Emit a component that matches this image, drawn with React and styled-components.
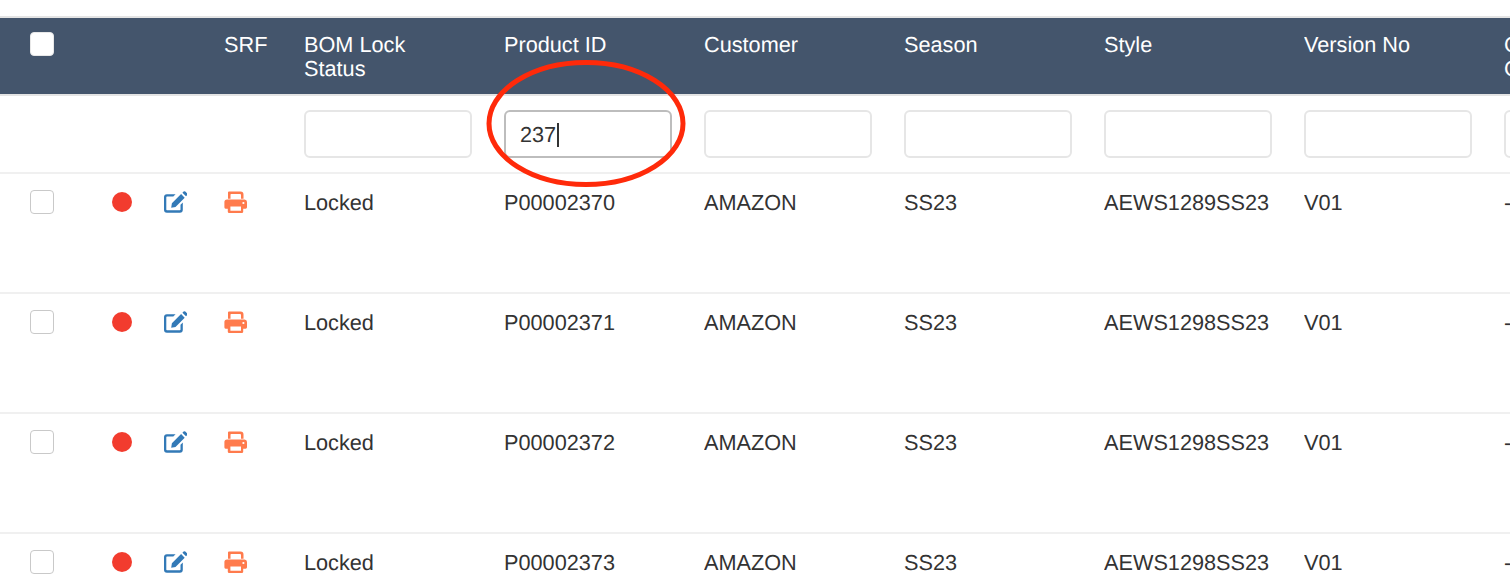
import React from "react";
import styled, { createGlobalStyle } from "styled-components";

const Global = createGlobalStyle`
  html, body { margin: 0; padding: 0; height: 100%; overflow: hidden; background: #fff; }
  body { font-family: "Liberation Sans", Arial, sans-serif; font-size: 21.7px; color: #333; text-rendering: geometricPrecision; }
`;
const COLS = "112px 52px 60px 80px repeat(7, 200px)";

const Page = styled.div`position: relative; width: 1510px; height: 578px; overflow: hidden; padding-top: 16px; box-sizing: border-box;`;
const Grid = styled.div`display: grid; grid-template-columns: ${COLS}; width: 1624px;`;
const HeaderRow = styled(Grid)`
  background: #44556c; color: #fff; height: 80px; box-sizing: border-box;
  border-top: 2px solid #e4e4e4; border-bottom: 2px solid #e4e4e4; line-height: 24px; padding-top: 14px;
`;
const HeadLabel = styled.div`white-space: pre-line; overflow: hidden; padding-top: 1px;`;
const FilterRow = styled(Grid)`height: 76px; box-sizing: border-box; padding-top: 14px;`;
const BodyRow = styled(Grid)`height: 120px; box-sizing: border-box; border-top: 2px solid #f0f0f0; padding-top: 16px; line-height: 24px;`;
const Cell = styled.div`white-space: pre-line; overflow: hidden; padding-top: ${p => (p.$text ? "1px" : "0")};`;
const CheckCell = styled.div`padding-left: 30px;`;
const Check = styled.span`
  display: block; width: 24px; height: 24px; box-sizing: border-box; border-radius: 4px;
  background: #fff; border: 1px solid ${p => (p.$head ? "#e8e8e8" : "#c9c9c9")};
`;
const Dot = styled.span`display: block; width: 20px; height: 20px; margin-top: 2px; border-radius: 50%; background: #f23c2e;`;
const IconCell = styled.div`color: ${p => p.$color}; line-height: 0; margin-left: ${p => p.$shift || 0}px;`;
const FilterInput = styled.div`
  width: 168px; height: 48px; box-sizing: border-box; border-radius: 6px;
  border: 2px solid ${p => (p.$active ? "#bdbdbd" : "#e6e6e6")};
  padding: 1px 14px 0; line-height: 44px; color: #333; display: flex; align-items: center;
`;
const Caret = styled.span`display: inline-block; width: 1.5px; height: 24px; margin-left: 1px; background: #333;`;
const Circle = styled.svg`position: absolute; left: 480px; top: 54px; pointer-events: none;`;

const EditIcon = () => (
  <svg width="24" height="24" viewBox="0 0 24 24" fill="currentColor">
    <path d="M12.6 4.2H3.9A2.9 2.9 0 0 0 1 7.1v12.7a2.9 2.9 0 0 0 2.9 2.9h13a2.9 2.9 0 0 0 2.9-2.9v-7.3l-2.3 2.3v4.8a.7.7 0 0 1-.7.7H4a.7.7 0 0 1-.7-.7V7.2a.7.7 0 0 1 .7-.7h6.3z" />
    <path d="M18.1 4.1l3.6 3.6-9.2 9.2-4.3.8.7-4.4zM19.4 2.8l1.2-1.2a1.2 1.2 0 0 1 1.7 0l1.8 1.8a1.2 1.2 0 0 1 0 1.7L23 6.3z" />
  </svg>
);
const PrintIcon = () => (
  <svg width="24" height="24" viewBox="0 0 24 24" fill="currentColor">
    <path fillRule="evenodd" d="M5 1.5h11.5a3 3 0 0 1 3 3v4.2H17V4.9a1 1 0 0 0-1-1H7.2a.7.7 0 0 0-.7.7v4.1H4V2.5a1 1 0 0 1 1-1zM3 9.5h17.5a2.6 2.6 0 0 1 2.5 2.6v5.2a1.4 1.4 0 0 1-1.4 1.4h-2.4v3a1.4 1.4 0 0 1-1.4 1.4H5.2a1.4 1.4 0 0 1-1.4-1.4v-3H1.6A1.4 1.4 0 0 1 .4 17.3v-5.2A2.6 2.6 0 0 1 3 9.5zm3.4 7v4.2h10.6v-4.2zm13-4.6a1.1 1.1 0 1 0 0 2.2 1.1 1.1 0 0 0 0-2.2z" />
  </svg>
);

const heads = ["BOM Lock\nStatus", "Product ID", "Customer", "Season", "Style", "Version No", "Color\nCode"];
const rows = [
  ["P00002370", "AEWS1289SS23"],
  ["P00002371", "AEWS1298SS23"],
  ["P00002372", "AEWS1298SS23"],
  ["P00002373", "AEWS1298SS23"],
];

export default function App() {
  return (
    <Page>
      <Global />
      <HeaderRow>
        <CheckCell><Check $head /></CheckCell>
        <Cell />
        <Cell />
        <HeadLabel>SRF</HeadLabel>
        {heads.map(h => <HeadLabel key={h}>{h}</HeadLabel>)}
      </HeaderRow>
      <FilterRow>
        <Cell /><Cell /><Cell /><Cell />
        {heads.map((h, i) => (
          <Cell key={h}>
            {i === 1
              ? <FilterInput $active>237<Caret /></FilterInput>
              : <FilterInput />}
          </Cell>
        ))}
      </FilterRow>
      {rows.map(([id, style]) => (
        <BodyRow key={id}>
          <CheckCell><Check /></CheckCell>
          <Cell><Dot /></Cell>
          <IconCell $color="#337ab7" $shift={-1}><EditIcon /></IconCell>
          <IconCell $color="#ff7b4d"><PrintIcon /></IconCell>
          <Cell $text>Locked</Cell>
          <Cell $text>{id}</Cell>
          <Cell $text>AMAZON</Cell>
          <Cell $text>SS23</Cell>
          <Cell $text>{style}</Cell>
          <Cell $text>V01</Cell>
          <Cell $text>-</Cell>
        </BodyRow>
      ))}
      <Circle width="212" height="140" viewBox="0 0 212 140">
        <ellipse cx="106" cy="69.5" rx="97" ry="61" fill="none" stroke="#ff2a0a" strokeWidth="5" />
      </Circle>
    </Page>
  );
}
